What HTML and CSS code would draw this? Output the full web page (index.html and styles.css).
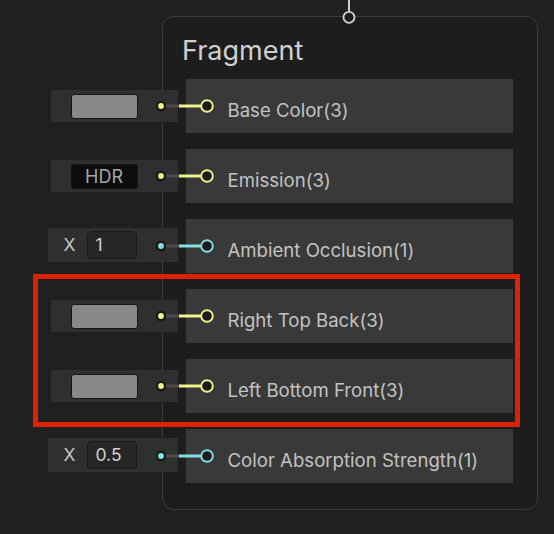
FILE: index.html
```html
<!DOCTYPE html>
<html>
<head>
<meta charset="utf-8">
<link rel="stylesheet" href="styles.css">
</head>
<body>
<div class="top-port">
  <svg width="16" height="26" viewBox="0 0 16 26"><line x1="8" y1="0" x2="8" y2="11" stroke="#cfcfcf" stroke-width="2"/><circle cx="8" cy="17.3" r="5.5" fill="#1e1e1e" stroke="#d4d4d4" stroke-width="1.8"/></svg>
</div>
<div class="node">
  <div class="title">Fragment</div>
  <div class="rows">
    <div class="row">
      <div class="wcol"><div class="widget w-color"><div class="swatch"></div></div></div>
      <div class="label">Base Color(3)</div>
      <svg class="conn" width="66" height="20" viewBox="0 0 66 20"><rect x="15" y="8.5" width="15" height="3" fill="#4c4c4c"/><line x1="29" y1="10" x2="52" y2="10" stroke="#f1f48c" stroke-width="3"/><circle cx="11" cy="10" r="5.2" fill="#181818"/><circle cx="11" cy="10" r="2.9" fill="#f1f48c"/><circle cx="57" cy="10" r="5.8" fill="#1c1c1c" stroke="#f1f48c" stroke-width="1.9"/></svg>
    </div>
    <div class="row">
      <div class="wcol"><div class="widget w-color"><div class="hdr">HDR</div></div></div>
      <div class="label">Emission(3)</div>
      <svg class="conn" width="66" height="20" viewBox="0 0 66 20"><rect x="15" y="8.5" width="15" height="3" fill="#4c4c4c"/><line x1="29" y1="10" x2="52" y2="10" stroke="#f1f48c" stroke-width="3"/><circle cx="11" cy="10" r="5.2" fill="#181818"/><circle cx="11" cy="10" r="2.9" fill="#f1f48c"/><circle cx="57" cy="10" r="5.8" fill="#1c1c1c" stroke="#f1f48c" stroke-width="1.9"/></svg>
    </div>
    <div class="row">
      <div class="wcol"><div class="widget w-field"><span class="axis">X</span><div class="field">1</div></div></div>
      <div class="label">Ambient Occlusion(1)</div>
      <svg class="conn" width="66" height="20" viewBox="0 0 66 20"><rect x="15" y="8.5" width="15" height="3" fill="#4c4c4c"/><line x1="29" y1="10" x2="52" y2="10" stroke="#84e2e6" stroke-width="3"/><circle cx="11" cy="10" r="5.2" fill="#181818"/><circle cx="11" cy="10" r="2.9" fill="#84e2e6"/><circle cx="57" cy="10" r="5.8" fill="#1c1c1c" stroke="#84e2e6" stroke-width="1.9"/></svg>
    </div>
    <div class="row">
      <div class="wcol"><div class="widget w-color"><div class="swatch"></div></div></div>
      <div class="label">Right Top Back(3)</div>
      <svg class="conn" width="66" height="20" viewBox="0 0 66 20"><rect x="15" y="8.5" width="15" height="3" fill="#4c4c4c"/><line x1="29" y1="10" x2="52" y2="10" stroke="#f1f48c" stroke-width="3"/><circle cx="11" cy="10" r="5.2" fill="#181818"/><circle cx="11" cy="10" r="2.9" fill="#f1f48c"/><circle cx="57" cy="10" r="5.8" fill="#1c1c1c" stroke="#f1f48c" stroke-width="1.9"/></svg>
    </div>
    <div class="row">
      <div class="wcol"><div class="widget w-color"><div class="swatch"></div></div></div>
      <div class="label">Left Bottom Front(3)</div>
      <svg class="conn" width="66" height="20" viewBox="0 0 66 20"><rect x="15" y="8.5" width="15" height="3" fill="#4c4c4c"/><line x1="29" y1="10" x2="52" y2="10" stroke="#f1f48c" stroke-width="3"/><circle cx="11" cy="10" r="5.2" fill="#181818"/><circle cx="11" cy="10" r="2.9" fill="#f1f48c"/><circle cx="57" cy="10" r="5.8" fill="#1c1c1c" stroke="#f1f48c" stroke-width="1.9"/></svg>
    </div>
    <div class="row">
      <div class="wcol"><div class="widget w-field"><span class="axis">X</span><div class="field">0.5</div></div></div>
      <div class="label">Color Absorption Strength(1)</div>
      <svg class="conn" width="66" height="20" viewBox="0 0 66 20"><rect x="15" y="8.5" width="15" height="3" fill="#4c4c4c"/><line x1="29" y1="10" x2="52" y2="10" stroke="#84e2e6" stroke-width="3"/><circle cx="11" cy="10" r="5.2" fill="#181818"/><circle cx="11" cy="10" r="2.9" fill="#84e2e6"/><circle cx="57" cy="10" r="5.8" fill="#1c1c1c" stroke="#84e2e6" stroke-width="1.9"/></svg>
    </div>
  </div>
</div>
<div class="highlight"></div>
</body>
</html>
```
FILE: styles.css
```css
html, body {
  margin: 0;
  padding: 0;
}
body {
  width: 554px;
  height: 534px;
  overflow: hidden;
  background: #202020;
  font-family: Inter, "Noto Sans", sans-serif;
  position: relative;
}
.top-port {
  position: absolute;
  left: 341px;
  top: 0;
  z-index: 2;
}
.top-port svg { display: block; }
.node {
  margin: 16px 0 0 162px;
  width: 376px;
  height: 494px;
  box-sizing: border-box;
  border: 1.5px solid #3c3c3c;
  border-radius: 12px;
  background: #1d1d1d;
}
.title {
  padding: 18px 0 0 19px;
  height: 32px;
  line-height: 32px;
  font-size: 27px;
  color: #d0d0d0;
}
.rows {
  margin-top: 12px;
  display: flex;
  flex-direction: column;
  gap: 16px;
}
.row {
  position: relative;
  display: flex;
  align-items: center;
  height: 54px;
  margin-left: -116.5px;
}
.wcol {
  width: 131px;
  display: flex;
  justify-content: flex-end;
  align-items: center;
}
.widget {
  background: #2f2f2f;
  box-sizing: border-box;
  display: flex;
  align-items: center;
}
.w-color {
  width: 127px;
  height: 32px;
  padding-left: 20px;
}
.w-field {
  width: 130px;
  height: 34px;
  padding-left: 16px;
  margin-top: -3px;
}
.swatch {
  width: 67px;
  height: 25px;
  box-sizing: border-box;
  background: #888888;
  border: 1px solid #151515;
  border-radius: 3px;
}
.hdr {
  width: 67px;
  height: 25px;
  box-sizing: border-box;
  background: #0c0c0c;
  border: 1px solid #151515;
  border-radius: 3px;
  color: #a6a6a6;
  font-size: 18px;
  line-height: 23px;
  text-align: center;
}
.axis {
  color: #c6c6c6;
  font-size: 17.5px;
  width: 23px;
}
.field {
  width: 50px;
  height: 28px;
  box-sizing: border-box;
  background: #262626;
  border: 1px solid #1a1a1a;
  border-radius: 4px;
  color: #d2d2d2;
  font-size: 17.5px;
  line-height: 26px;
  padding-left: 8px;
}
.label {
  margin-left: 8px;
  width: 327px;
  height: 54px;
  box-sizing: border-box;
  overflow: hidden;
  background: #393939;
  color: #c2c2c2;
  font-size: 18.6px;
  line-height: 54px;
  padding-left: 42px;
  padding-top: 3.5px;
}
.conn {
  position: absolute;
  left: 103px;
  top: 17px;
}
.highlight {
  position: absolute;
  left: 33px;
  top: 274px;
  width: 487px;
  height: 153px;
  box-sizing: border-box;
  border: 5px solid #dc2200;
}
```
